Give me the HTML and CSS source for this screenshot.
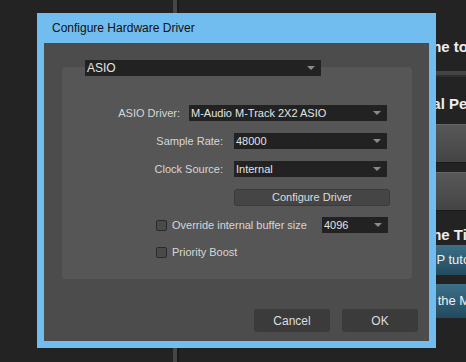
FILE: index.html
```html
<!DOCTYPE html>
<html lang="en">
<head>
    <meta charset="UTF-8">
    <title>Configure Hardware Driver</title>
    <link rel="stylesheet" href="styles.css">
</head>
<body>
    <div class="app">
        <div class="sidebar"></div>
        <div class="divider"></div>
        <div class="main">
            <h2>Welcome to the Studio</h2>
            <div class="separator"></div>
            <h3>Optional Pedals</h3>
            <div class="tile"></div>
            <div class="tile"></div>
            <h3 class="tips">Welcome Tips</h3>
            <div class="link-btn">View MP tutorials</div>
            <div class="link-btn second">Explore the Manual</div>
        </div>
    </div>

    <div class="dialog">
        <div class="dialog-title">Configure Hardware Driver</div>
        <div class="dialog-body">
            <div class="select top-select">ASIO<span class="arrow"></span></div>
            <div class="panel">
                <div class="row">
                    <label class="label driver-label">ASIO Driver:</label>
                    <div class="select driver-select">M-Audio M-Track 2X2 ASIO<span class="arrow"></span></div>
                </div>
                <div class="row">
                    <label class="label">Sample Rate:</label>
                    <div class="select field-select">48000<span class="arrow"></span></div>
                </div>
                <div class="row">
                    <label class="label">Clock Source:</label>
                    <div class="select field-select">Internal<span class="arrow"></span></div>
                </div>
                <div class="row">
                    <button class="config-btn">Configure Driver</button>
                </div>
                <div class="row check-row">
                    <span class="checkbox"></span>
                    <span class="check-label">Override internal buffer size</span>
                    <div class="select buffer-select">4096<span class="arrow"></span></div>
                </div>
                <div class="row check-row">
                    <span class="checkbox"></span>
                    <span class="check-label">Priority Boost</span>
                </div>
            </div>
            <div class="footer">
                <button class="dlg-btn">Cancel</button>
                <button class="dlg-btn">OK</button>
            </div>
        </div>
    </div>
</body>
</html>
```

FILE: styles.css
```css
body {
    margin: 0;
    width: 466px;
    height: 362px;
    overflow: hidden;
    background: #232323;
    font-family: "Liberation Sans", Arial, sans-serif;
}
.app {
    display: flex;
    height: 362px;
}
.sidebar {
    flex: 0 0 173px;
}
.divider {
    flex: 0 0 4px;
    background: #464646;
    border-right: 2px solid #1a1a1a;
}
.main {
    flex: 1;
    min-width: 0;
    overflow: hidden;
    padding-left: 205px;
    color: #eeeeee;
}
.main h2 {
    margin: 38px 0 0 0;
    font-size: 15px;
    line-height: 18px;
    white-space: nowrap;
}
.separator {
    height: 4px;
    margin-top: 15px;
    background: #444;
    border-bottom: 2px solid #2e2e2e;
}
.main h3 {
    margin: 18px 0 0 0;
    font-size: 15px;
    line-height: 18px;
    white-space: nowrap;
}
.tile {
    height: 37px;
    margin-top: 11px;
    width: 120px;
    background: linear-gradient(#585858, #444);
    border-top: 1px solid #666;
    border-bottom: 1px solid #1a1a1a;
}
.tile + .tile {
    margin-top: 9px;
}
.main h3.tips {
    margin-top: 15px;
}
.link-btn {
    width: 120px;
    height: 30px;
    margin-top: 1px;
    padding-left: 10px;
    line-height: 30px;
    font-size: 13px;
    white-space: nowrap;
    color: #f0f0f0;
    background: linear-gradient(#3c7089, #234a5d);
    border-radius: 3px;
}
.link-btn.second {
    height: 34px;
    line-height: 34px;
    margin-top: 9px;
    padding-left: 6px;
}

.dialog {
    position: absolute;
    left: 37px;
    top: 13px;
    width: 385px;
    padding: 0 7px 7px 7px;
    background: #71bdf0;
}
.dialog-title {
    height: 30px;
    line-height: 30px;
    padding-left: 8px;
    font-size: 12px;
    color: #111;
}
.dialog-body {
    position: relative;
    height: 298px;
    background: #4c4c4c;
    display: flex;
    flex-direction: column;
    color: #d6d6d6;
    font-size: 11px;
}
.select {
    position: relative;
    box-sizing: border-box;
    height: 16px;
    line-height: 16px;
    padding-left: 2px;
    background: #222;
    color: #e4e4e4;
    font-size: 11px;
    white-space: nowrap;
}
.arrow {
    position: absolute;
    right: 6px;
    top: 6px;
    width: 0;
    height: 0;
    border-left: 4px solid transparent;
    border-right: 4px solid transparent;
    border-top: 4px solid #8a8a8a;
}
.top-select {
    width: 236px;
    margin: 17px 0 -9px 41px;
    z-index: 1;
    font-size: 12px;
}
.panel {
    margin-left: 18px;
    width: 350px;
    height: 174px;
    padding-top: 38px;
    background: #565656;
    border-radius: 4px;
}
.row {
    display: flex;
    align-items: center;
    height: 16px;
    margin-bottom: 12px;
}
.label {
    width: 161px;
    margin-right: 11px;
    text-align: right;
}
.driver-label {
    width: 118px;
    margin-right: 9px;
}
.driver-select {
    width: 198px;
}
.field-select {
    width: 153px;
}
.config-btn {
    margin-left: 172px;
    width: 156px;
    height: 17px;
    padding: 0;
    border: 1px solid #3a3a3a;
    border-radius: 3px;
    background: #454545;
    color: #dcdcdc;
    font-family: inherit;
    font-size: 11px;
}
.check-row {
    margin-bottom: 11px;
}
.checkbox {
    box-sizing: border-box;
    width: 11px;
    height: 11px;
    margin-left: 94px;
    margin-right: 5px;
    border: 1px solid #2a2a2a;
    border-radius: 2px;
    background: #4a4a4a;
}
.check-label {
    width: 150px;
}
.buffer-select {
    width: 66px;
}
.footer {
    margin-top: auto;
    display: flex;
    justify-content: flex-end;
    gap: 12px;
    padding: 0 11px 9px 0;
}
.dlg-btn {
    width: 76px;
    height: 23px;
    padding: 0;
    border: none;
    border-radius: 3px;
    background: #3b3b3b;
    color: #dedede;
    font-family: inherit;
    font-size: 12px;
}
```
